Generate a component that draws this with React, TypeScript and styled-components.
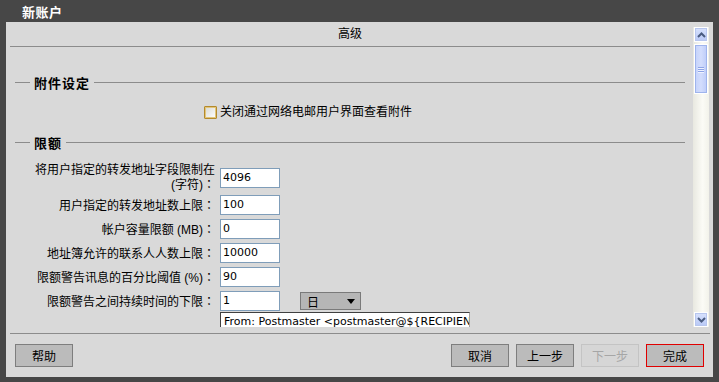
import { Fragment } from "react";
import styled, { createGlobalStyle } from "styled-components";

const GlobalStyle = createGlobalStyle`
  html, body {
    margin: 0;
    padding: 0;
    background: #474747;
  }
  body {
    font-family: "Liberation Sans", "Noto Sans CJK SC", sans-serif;
    font-size: 12px;
    color: #000000;
  }
`;

const Screen = styled.div`
  width: 719px;
  height: 382px;
  background: #474747;
  display: flex;
  flex-direction: column;
  overflow: hidden;
`;

const TitleBar = styled.div`
  height: 22px;
  padding-left: 22px;
  line-height: 25px;
  font-size: 13px;
  font-weight: 700;
  letter-spacing: 0.5px;
  color: #ffffff;
  box-sizing: border-box;
`;

const Panel = styled.div`
  height: 355px;
  margin: 0 6px;
  background: #d9d9d9;
  padding: 5px 4px 0 4px;
  box-sizing: border-box;
  display: flex;
  flex-direction: column;
`;

const BodyRow = styled.div`
  height: 300px;
  display: flex;
  gap: 3px;
`;

const ScrollContent = styled.div`
  width: 680px;
  height: 300px;
  overflow: hidden;
`;

const PageHeader = styled.div`
  height: 19px;
  line-height: 14px;
  text-align: center;
  border-bottom: 1px solid #8c8c8c;
`;

const SectionTitle = styled.div<{ $top: number }>`
  margin-top: ${(p) => p.$top}px;
  padding: 0 5px;
  height: 14px;
  display: flex;
  align-items: center;
  gap: 4px;
  font-size: 13px;
  font-weight: 700;
  letter-spacing: 1px;
  white-space: nowrap;

  &::before {
    content: "";
    width: 15px;
    border-top: 1px solid #8c8c8c;
  }

  &::after {
    content: "";
    flex: 1;
    border-top: 1px solid #8c8c8c;
  }
`;

const CheckRow = styled.label`
  margin-top: 17px;
  padding-left: 194px;
  height: 13px;
  display: flex;
  align-items: center;
  gap: 3px;
  line-height: 13px;
`;

const CheckBox = styled.span`
  width: 13px;
  height: 13px;
  box-sizing: border-box;
  border: 1px solid #b48a2c;
  border-radius: 1px;
  box-shadow: inset 0 0 0 1px #e2c57a;
  background: linear-gradient(135deg, #d9d9d2 0%, #ffffff 100%);
`;

const FormGrid = styled.div`
  margin-top: 16px;
  display: grid;
  grid-template-columns: 205px 1fr;
  column-gap: 5px;
  row-gap: 4px;
  align-items: center;
`;

const Label = styled.div<{ $double?: boolean }>`
  text-align: right;
  line-height: 13px;
  height: ${(p) => (p.$double ? 26 : 20)}px;
  display: flex;
  flex-direction: column;
  justify-content: center;
  align-items: flex-end;
  white-space: nowrap;
`;

const Colon = styled.span`
  font-family: "Noto Sans CJK TC", sans-serif;
`;

const ValueCell = styled.div`
  display: flex;
  align-items: center;
  gap: 20px;
`;

const TextInput = styled.div`
  width: 60px;
  height: 20px;
  box-sizing: border-box;
  border: 1px solid #7f9db9;
  background: #ffffff;
  padding-left: 2px;
  line-height: 18px;
  font-family: "DejaVu Sans", sans-serif;
  font-size: 11px;
`;

const Select = styled.div`
  width: 61px;
  height: 18px;
  box-sizing: border-box;
  border: 1px solid #7a7a7a;
  background: #b6b6b6;
  display: flex;
  align-items: center;
  justify-content: space-between;
  padding: 0 5px 0 6px;
`;

const Caret = styled.span`
  width: 0;
  height: 0;
  border-left: 4px solid transparent;
  border-right: 4px solid transparent;
  border-top: 5px solid #000000;
`;

const MessageBox = styled.div`
  margin-top: -3px;
  width: 250px;
  height: 40px;
  box-sizing: border-box;
  border-top: 1px solid #404040;
  border-left: 1px solid #404040;
  border-right: 1px solid #a0a0a0;
  background: #ffffff;
  padding: 2px 3px;
  font-family: "DejaVu Sans", sans-serif;
  font-size: 11px;
  white-space: nowrap;
  overflow: hidden;
`;

const ScrollBar = styled.div`
  width: 16px;
  height: 300px;
  display: flex;
  flex-direction: column;
  background: linear-gradient(90deg, #e8e8e0 0%, #fbfbf6 60%, #f2f2ea 100%);
`;

const ArrowButton = styled.div`
  width: 14px;
  height: 15px;
  margin: 0 1px;
  box-sizing: border-box;
  border: 1px solid #ffffff;
  outline: 1px solid #b7c6ee;
  outline-offset: -2px;
  background: linear-gradient(180deg, #d8e2fd 0%, #b8c8f6 100%);
  display: flex;
  align-items: center;
  justify-content: center;
`;

const Thumb = styled.div`
  width: 14px;
  height: 50px;
  margin: 2px 1px 0 1px;
  box-sizing: border-box;
  border: 1px solid #ffffff;
  outline: 1px solid #9fb4ec;
  outline-offset: -2px;
  background: linear-gradient(90deg, #c4d2fb 0%, #d3ddfd 50%, #bccbf8 100%);
  display: flex;
  flex-direction: column;
  align-items: center;
  justify-content: center;
  gap: 1px;
`;

const Grip = styled.span`
  width: 6px;
  height: 1px;
  background: #8ea4e6;
  box-shadow: 0 1px 0 #eef2ff;
`;

const Track = styled.div`
  flex: 1;
`;

const Footer = styled.div`
  margin: 6px -1px 0 0;
  border-top: 1px solid #8c8c8c;
  padding: 10px 6px 10px 5px;
  display: flex;
  align-items: center;
`;

const Spacer = styled.div`
  flex: 1;
`;

const ButtonGroup = styled.div`
  display: flex;
  gap: 7px;
`;

const Button = styled.button<{ $primary?: boolean; $disabled?: boolean }>`
  width: 58px;
  height: 23px;
  box-sizing: border-box;
  border: 1px solid
    ${(p) => (p.$primary ? "#e00000" : p.$disabled ? "#c4c4c4" : "#7e7e7e")};
  background: ${(p) => (p.$disabled ? "#d6d6d6" : "#bbbbbb")};
  color: ${(p) => (p.$disabled ? "#a6a6a6" : "#000000")};
  font-family: "Liberation Sans", "Noto Sans CJK SC", sans-serif;
  font-size: 12px;
  padding: 0;
  cursor: pointer;
`;

const Chevron = ({ down }: { down?: boolean }) => (
  <svg width="9" height="6" viewBox="0 0 9 6">
    <path
      d={down ? "M1 1 L4.5 4.5 L8 1" : "M1 5 L4.5 1.5 L8 5"}
      fill="none"
      stroke="#4a5c80"
      strokeWidth="2"
    />
  </svg>
);

const rows = [
  { label: "用户指定的转发地址数上限", value: "100" },
  { label: "帐户容量限额 (MB)", value: "0" },
  { label: "地址簿允许的联系人人数上限", value: "10000" },
  { label: "限额警告讯息的百分比阈值 (%)", value: "90" },
];

const App = () => {
  return (
    <Screen>
      <GlobalStyle />
      <TitleBar>新账户</TitleBar>
      <Panel>
        <BodyRow>
          <ScrollContent>
            <PageHeader>高级</PageHeader>

            <SectionTitle $top={28}>附件设定</SectionTitle>
            <CheckRow>
              <CheckBox />
              <span>关闭通过网络电邮用户界面查看附件</span>
            </CheckRow>

            <SectionTitle $top={16}>限额</SectionTitle>
            <FormGrid>
              <Label $double>
                <span>将用户指定的转发地址字段限制在</span>
                <span>
                  (字符)<Colon>：</Colon>
                </span>
              </Label>
              <ValueCell>
                <TextInput>4096</TextInput>
              </ValueCell>

              {rows.map((r) => (
                <Fragment key={r.label}>
                  <Label>
                    <span>
                      {r.label}
                      <Colon>：</Colon>
                    </span>
                  </Label>
                  <ValueCell>
                    <TextInput>{r.value}</TextInput>
                  </ValueCell>
                </Fragment>
              ))}

              <Label>
                <span>
                  限额警告之间持续时间的下限<Colon>：</Colon>
                </span>
              </Label>
              <ValueCell>
                <TextInput>1</TextInput>
                <Select>
                  <span>日</span>
                  <Caret />
                </Select>
              </ValueCell>

              <div />
              <MessageBox>
                From: Postmaster &lt;postmaster@${"{"}RECIPIENT_DOMAIN{"}"}&gt;
              </MessageBox>
            </FormGrid>
          </ScrollContent>

          <ScrollBar>
            <ArrowButton>
              <Chevron />
            </ArrowButton>
            <Thumb>
              <Grip />
              <Grip />
              <Grip />
            </Thumb>
            <Track />
            <ArrowButton>
              <Chevron down />
            </ArrowButton>
          </ScrollBar>
        </BodyRow>

        <Footer>
          <Button>帮助</Button>
          <Spacer />
          <ButtonGroup>
            <Button>取消</Button>
            <Button>上一步</Button>
            <Button $disabled>下一步</Button>
            <Button $primary>完成</Button>
          </ButtonGroup>
        </Footer>
      </Panel>
    </Screen>
  );
};

export default App;
